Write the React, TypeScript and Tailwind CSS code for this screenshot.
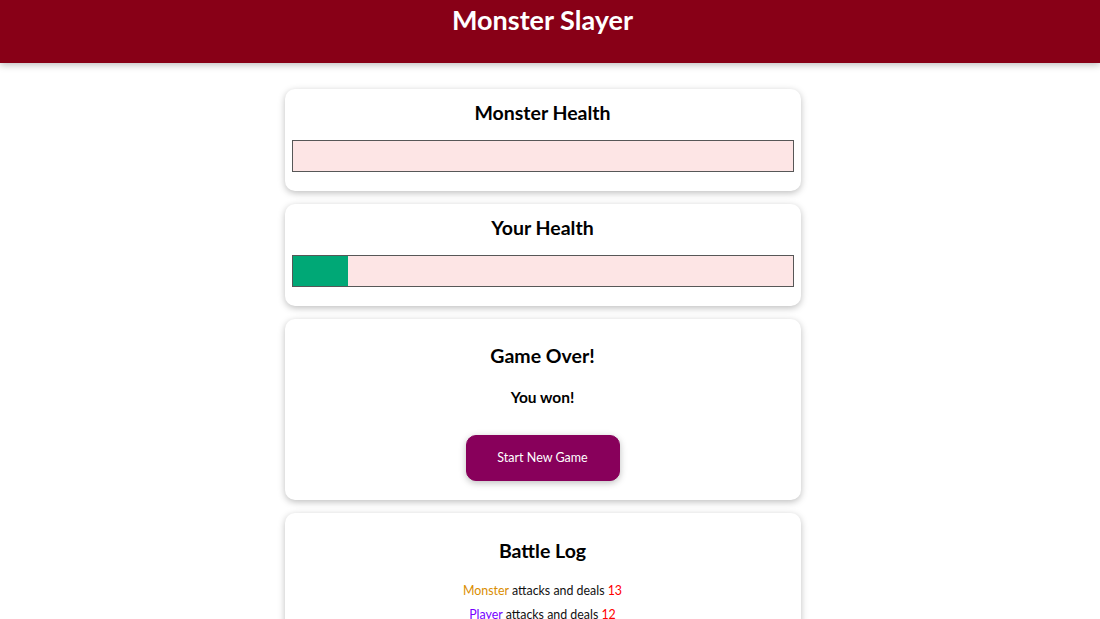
import React from "react";

const font = { fontFamily: "Lato, 'Noto Sans', sans-serif" };

function Card({ children, className = "" }: { children: React.ReactNode; className?: string }) {
  return (
    <div
      className={`w-[516px] mx-auto bg-white rounded-[10px] shadow-[0_2px_7px_rgba(0,0,0,0.26)] px-[7px] text-center ${className}`}
    >
      {children}
    </div>
  );
}

function HealthBar({ pct }: { pct: number }) {
  return (
    <div className="mt-[13px] h-[32px] w-full border border-[#575757] bg-[#fde5e5]">
      <div className="h-full bg-[#00a876]" style={{ width: `${pct}%` }} />
    </div>
  );
}

export default function App() {
  return (
    <div className="min-h-[619px] bg-white text-black" style={font}>
      <header className="h-[63px] bg-[#880017] text-white shadow-[0_2px_7px_rgba(0,0,0,0.26)] pt-[4px]">
        <div className="w-[1085px] text-center">
          <h1 className="text-[27px] leading-[32px] font-bold">Monster Slayer</h1>
        </div>
      </header>
      <div className="w-[1085px] mt-[26px] flex flex-col gap-[13px]">
        <Card className="pt-[10px] pb-[19px]">
          <h2 className="text-[19.5px] leading-[28px] font-bold">Monster Health</h2>
          <HealthBar pct={0} />
        </Card>
        <Card className="pt-[10px] pb-[19px]">
          <h2 className="text-[19.5px] leading-[28px] font-bold">Your Health</h2>
          <HealthBar pct={11} />
        </Card>
        <Card className="pt-[23px] pb-[19px]">
          <h2 className="text-[19.5px] leading-[28px] font-bold">Game Over!</h2>
          <h3 className="mt-[17px] text-[15.5px] leading-[21px] font-bold">You won!</h3>
          <button className="mt-[27px] w-[154px] h-[46px] rounded-[10px] bg-[#88005b] border border-[#88005b] text-white text-[12.5px] shadow-[0_2px_7px_rgba(0,0,0,0.26)]">
            Start New Game
          </button>
        </Card>
        <Card className="pt-[24px] pb-[19px]">
          <h2 className="text-[19.5px] leading-[28px] font-bold">Battle Log</h2>
          <ul className="mt-[17px] flex flex-col gap-[6px] text-[12.4px] leading-[18px] text-[#111]">
            <li>
              <span className="text-[#da8d00]">Monster</span> attacks and deals{" "}
              <span className="text-[#ff0000]">13</span>
            </li>
            <li>
              <span className="text-[#7700ff]">Player</span> attacks and deals{" "}
              <span className="text-[#ff0000]">12</span>
            </li>
          </ul>
        </Card>
      </div>
    </div>
  );
}
